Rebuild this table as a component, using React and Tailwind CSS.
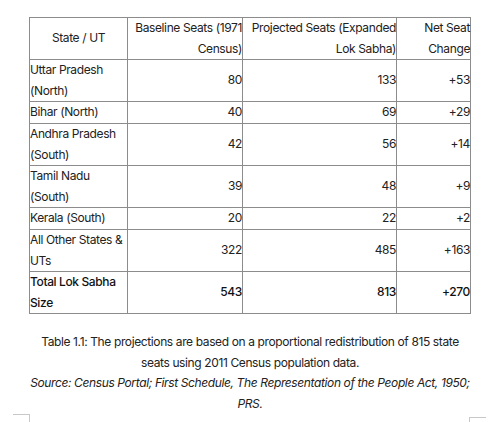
import React from "react";

const rows = [
  ["Uttar Pradesh (North)", "80", "133", "+53", 2],
  ["Bihar (North)", "40", "69", "+29", 1],
  ["Andhra Pradesh (South)", "42", "56", "+14", 2],
  ["Tamil Nadu (South)", "39", "48", "+9", 2],
  ["Kerala (South)", "20", "22", "+2", 1],
  ["All Other States & UTs", "322", "485", "+163", 2],
];

export default function App() {
  const cell = "border border-[#8c8c8c] p-0 align-middle";
  return (
    <div
      className="w-[500px] h-[422px] bg-white text-[#222] overflow-hidden flex flex-col"
      style={{ fontFamily: "Inter, 'Noto Sans', sans-serif" }}
    >
      <div className="pt-[17px] pl-[29px]">
        <table className="border-collapse text-[12px] leading-[20.5px] tracking-[-0.38px] table-fixed w-[441px]">
          <colgroup>
            <col className="w-[98px]" />
            <col className="w-[115px]" />
            <col className="w-[154px]" />
            <col className="w-[74px]" />
          </colgroup>
          <thead>
            <tr className="h-[41px]">
              <th className={`${cell} text-center font-normal`}>State / UT</th>
              <th className={`${cell} text-right font-normal`}>Baseline Seats (1971 Census)</th>
              <th className={`${cell} text-right font-normal`}>Projected Seats (Expanded Lok Sabha)</th>
              <th className={`${cell} text-right font-normal`}>Net Seat Change</th>
            </tr>
          </thead>
          <tbody>
            {rows.map((r) => (
              <tr key={r[0]} className={r[4] === 2 ? "h-[42px]" : "h-[22px]"}>
                <td className={`${cell} text-left`}>{r[0]}</td>
                <td className={`${cell} text-right`}>{r[1]}</td>
                <td className={`${cell} text-right`}>{r[2]}</td>
                <td className={`${cell} text-right`}>{r[3]}</td>
              </tr>
            ))}
            <tr className="h-[42px] font-medium text-[#111]">
              <td className={`${cell} text-left`}>Total Lok Sabha Size</td>
              <td className={`${cell} text-right`}>543</td>
              <td className={`${cell} text-right`}>813</td>
              <td className={`${cell} text-right`}>+270</td>
            </tr>
          </tbody>
        </table>
      </div>
      <div className="mt-[18px] px-[10px] text-center text-[12px] leading-[20.5px] tracking-[-0.38px]">
        <p>
          Table 1.1: The projections are based on a proportional redistribution of 815 state
          <br />
          seats using 2011 Census population data.
        </p>
        <p className="italic">
          Source: Census Portal; First Schedule, The Representation of the People Act, 1950;
          <br />
          PRS.
        </p>
      </div>
      <div className="flex justify-between mt-auto h-[9px]">
        <div className="ml-[13px] w-[17px] border-t border-r border-[#c8c8c8]" />
        <div className="mr-[14px] mt-[3px] w-[17px] border-t border-l border-[#c8c8c8]" />
      </div>
    </div>
  );
}
